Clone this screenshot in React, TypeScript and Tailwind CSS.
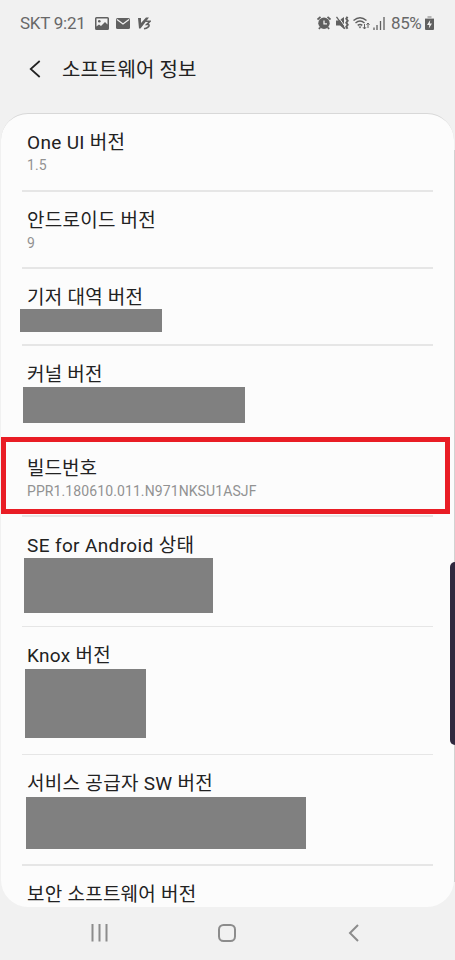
import type { ReactNode } from "react";

type RowProps = {
  title: string;
  tracking?: string;
  value?: string;
  mask?: string;
  className: string;
};

function Row({ title, tracking = "", value, mask, className }: RowProps) {
  return (
    <div className={`flex flex-col items-start border-[#e6e6e6] ${className}`}>
      <div className={`mt-[17px] ml-[5px] h-6 shrink-0 whitespace-nowrap text-[19px] leading-[23px] text-[#222] ${tracking}`}>{title}</div>
      {value && <div className="ml-[5px] h-5 text-sm leading-5 tracking-[0.1px] text-[#929292]">{value}</div>}
      {mask && <div className={`shrink-0 bg-[#808080] ${mask}`} />}
    </div>
  );
}

function Icon({ w, h, className = "", children }: { w: number; h: number; className?: string; children: ReactNode }) {
  return (
    <svg width={w} height={h} viewBox={`0 0 ${w} ${h}`} fill="none" className={`shrink-0 ${className}`}>
      {children}
    </svg>
  );
}

function StatusBar() {
  return (
    <div className="flex h-[46px] items-center pr-[21px] pl-5 text-[#686868]">
      <span className="w-[67px] pt-px text-[17px] tracking-[-0.25px] whitespace-nowrap">SKT 9:21</span>
      <Icon w={14} h={13} className="ml-2">
        <path fillRule="evenodd" d="M1.5 0h11Q14 0 14 1.5v10q0 1.5-1.5 1.5h-11Q0 13 0 11.500v-10Q0 0 1.500 0ZM1.500 1.500v8l2.500-2 2 1.500 4-4 2.500 2.500v-6Z" fill="#606060" />
        <circle cx="4.300" cy="4.300" r="1.300" fill="#606060" />
      </Icon>
      <Icon w={14} h={11} className="ml-[7px]">
        <rect width="14" height="11" rx="1.500" fill="#606060" />
        <path d="m1 1.500 6 4.500 6-4.500" stroke="#f1f1f1" strokeWidth="1.200" />
      </Icon>
      <Icon w={13} h={13} className="ml-2">
        <path d="M0 1h3v5L8 .5h3L2.500 11.500H1Z" fill="#606060" />
        <path d="M7.500 4.300H12L8.700 7.500h2q1 1.200-.7 2.600-1.500 1.400-4 1.700" stroke="#606060" strokeWidth="1.600" />
      </Icon>
      <div className="flex-1" />
      <Icon w={14} h={14}>
        <path d="m.5 3.500 3-2.700M10.500.8l3 2.700M3 11.500 2 13m9-1.500 1 1.500" stroke="#606060" strokeWidth="1.800" />
        <circle cx="7" cy="7.300" r="5.700" fill="#606060" />
        <path d="M7 4.500v3.300h3" stroke="#f1f1f1" strokeWidth="1.300" />
      </Icon>
      <Icon w={13} h={14} className="ml-[5px]">
        <path d="M0 4.500h3L8 1v12L4 9.500H0Z" fill="#606060" />
        <path d="m2 .5 7 10" stroke="#f1f1f1" strokeWidth="1" />
        <path d="m.5.800 8.500 12" stroke="#606060" strokeWidth="1.300" />
        <path d="m11.500.8-1.200 2 1.400 2-1.400 2 1.400 2-1.400 2 1.200 2" stroke="#606060" strokeWidth="2" />
      </Icon>
      <Icon w={17} h={14} className="ml-1">
        <path d="M.5 4.500Q7-1.200 13.500 4.500M2.500 7q4.500-3.800 9 0M4.700 9.400q2.300-2 4.600 0" stroke="#606060" strokeWidth="1.400" />
        <path d="m5.500 10.500 1.500 2 1.500-2Z" fill="#606060" />
        <path d="M11.500 8v5m-1.500-1.800 1.500 1.800 1.500-1.800M15 12V7m-1.500 1.800L15 7l1.500 1.800" stroke="#606060" />
      </Icon>
      <Icon w={12} h={13} className="ml-[3px]">
        <path d="M1 10.500V13m3-5v5m3.500-9v9M11 0v13" stroke="#606060" strokeWidth="1.300" />
      </Icon>
      <span className="ml-[6px] w-[32px] pt-px text-[17px] tracking-[-0.4px] whitespace-nowrap">85%</span>
      <Icon w={9} h={14} className="ml-[2px]">
        <path d="M2.500 0h4v2H9v3H0V2h2.500Z" fill="#b5b5b5" />
        <path d="M0 3h9v10q0 1-1 1H1q-1 0-1-1Z" fill="#606060" />
        <path d="M5.200 4 2 9h2.300L3.800 12.500 7 7.500H4.800Z" fill="#f1f1f1" />
      </Icon>
    </div>
  );
}

export default function App() {
  return (
    <div className="relative flex h-[960px] w-[455px] flex-col overflow-hidden bg-[#f1f1f1] font-['Roboto','Noto_Sans_CJK_KR',sans-serif]">
      <StatusBar />
      <header className="flex h-[67px] items-start pt-[11px] pl-[29px]">
        <Icon w={12} h={18} className="mt-[3px]">
          <path d="m10.700 1-9 8 9 8" stroke="#222" strokeWidth="1.700" />
        </Icon>
        <h1 className="mt-px ml-[21px] text-[20px] leading-6 tracking-[0.1px] text-[#222]">소프트웨어 정보</h1>
      </header>
      <main className="mx-px h-[794px] shrink-0 overflow-hidden rounded-[27px] border-t border-[#d8d8d8] bg-[#fcfcfc] pr-[21px] pl-[21px]">
        <Row title="One UI 버전" tracking="tracking-[0.32px]" value="1.5" className="h-[78px] border-b-2" />
        <Row title="안드로이드 버전" tracking="tracking-[0.25px]" value="9" className="h-[77px] border-b-2" />
        <Row title="기저 대역 버전" tracking="tracking-[0.25px]" mask="-ml-[2px] mt-[-1px] h-[23px] w-[142px]" className="h-[77px] border-b-2" />
        <Row title="커널 버전" tracking="tracking-[0.2px]" mask="ml-px h-9 w-[222px]" className="h-[94px] border-b-2" />
        <Row title="빌드번호" value="PPR1.180610.011.N971NKSU1ASJF" className="h-[77px] border-b-2" />
        <Row title="SE for Android 상태" tracking="tracking-[0.37px]" mask="ml-[2px] h-[55px] w-[189px]" className="h-[110px] border-b" />
        <Row title="Knox 버전" tracking="tracking-[0.3px]" mask="ml-[3px] mt-px h-[69px] w-[121px]" className="h-[128px] border-b" />
        <Row title="서비스 공급자 SW 버전" tracking="tracking-[0.3px]" mask="ml-1 mt-px h-[52px] w-[280px]" className="h-[111px] border-b-2" />
        <Row title="보안 소프트웨어 버전" tracking="tracking-[0.25px]" className="h-[41px]" />
      </main>
      <nav className="flex h-[53px] items-start">
        <Icon w={17} h={18} className="mt-[17px] ml-[91px]">
          <path d="M1.500 0v17.500M8.500 0v17.500M15.500 0v17.500" stroke="#8c8c8c" strokeWidth="2" />
        </Icon>
        <Icon w={18} h={18} className="mt-[17px] ml-[110px]">
          <rect x="1" y="1" width="16" height="16" rx="4.500" stroke="#8c8c8c" strokeWidth="2" />
        </Icon>
        <Icon w={11} h={18} className="mt-[17px] ml-[112px]">
          <path d="M10 1 2 9l8 8" stroke="#8c8c8c" strokeWidth="2" />
        </Icon>
      </nav>
      <div className="absolute top-[437px] left-px h-[77px] w-[449px] border-[5px] border-[#e91d25]" />
      <div className="absolute top-[150px] right-0 h-[732px] w-px bg-[#d2d2d2]" />
      <div className="absolute top-[562px] right-0 h-[183px] w-[5px] rounded-l-[5px] bg-[#30293f]" />
    </div>
  );
}
